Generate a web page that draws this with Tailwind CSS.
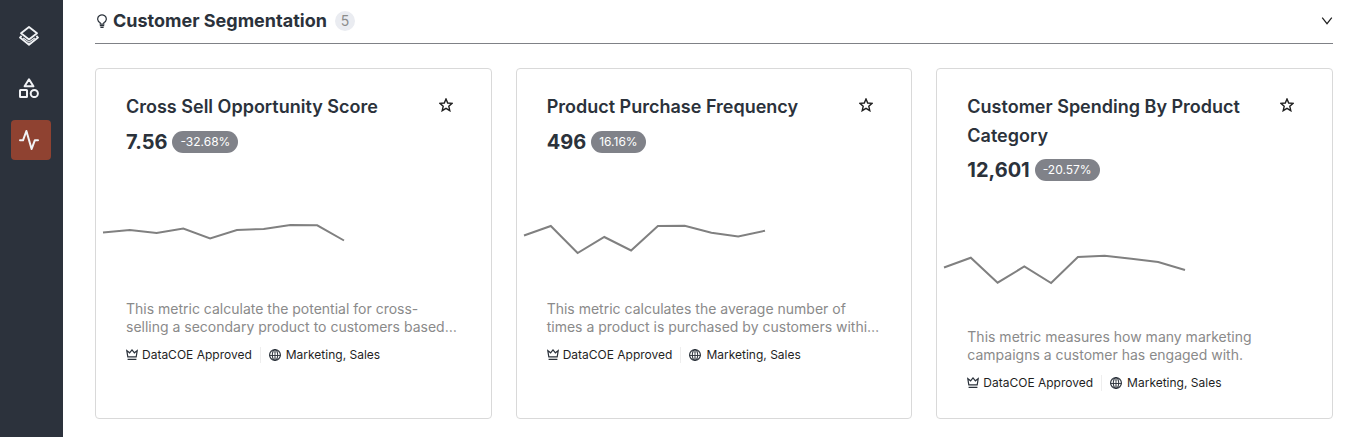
<!DOCTYPE html>
<html lang="en">
<head>
<meta charset="utf-8">
<meta name="viewport" content="width=device-width, initial-scale=1">
<title>Customer Segmentation</title>
<script src="https://cdn.jsdelivr.net/npm/@tailwindcss/browser@4"></script>
</head>
<body class="flex min-h-screen bg-white font-['Inter',sans-serif] text-[#2b323b]">
<svg class="hidden" aria-hidden="true">
  <symbol id="star" viewBox="0 0 14 14"><path d="M7 1 8.7 5l4.4.4-3.3 2.9 1 4.4L7 10.4l-3.8 2.3 1-4.4L.9 5.4 5.3 5Z" fill="none" stroke="#1f1f1f" stroke-width="1.4"/></symbol>
  <symbol id="crown" viewBox="0 0 12 12"><path d="M.8 1.6 1.8 7.9h8.4l1-6.3L8.4 3.8 6 .9 3.6 3.8ZM1.6 10.4h8.8" fill="none" stroke="#2b323b" stroke-width="1.2"/></symbol>
  <symbol id="globe" viewBox="0 0 12 12"><g fill="none" stroke="#2b323b"><circle cx="6" cy="6" r="5.4" stroke-width="1.2"/><ellipse cx="6" cy="6" rx="2.7" ry="5.4"/><path d="M.6 6.5h10.8M6 .6v10.8" stroke-width=".9"/><path d="M2 2.6q4 1.2 8 0M2 9.6q4-1.2 8 0" stroke-width=".4"/></g></symbol>
</svg>
<nav aria-label="Main" class="flex w-[63px] shrink-0 flex-col gap-3 bg-[#2c323c] pt-4 pl-[11px] text-[#f1f3f6]">
  <a href="#" aria-label="Layers" class="flex size-10 items-center rounded pl-2">
    <svg class="size-5" viewBox="0 0 20 20" fill="none" stroke="currentColor" stroke-width="1.8" stroke-linejoin="round"><path d="M10 1 18 7.3 10 13.5 2 7.3Z"/><path d="M2.6 9.8 1 11.5 10 18.7l9-7.2-1.6-1.7"/><path d="m4.2 12 5.8 4.1 5.8-4.1" stroke-width="1.1"/></svg>
  </a>
  <a href="#" aria-label="Categories" class="flex size-10 items-center rounded pl-2">
    <svg class="size-5" viewBox="0 0 20 20" fill="none" stroke="currentColor" stroke-width="2" stroke-linejoin="round"><path d="m10 1.3 4.4 7H5.6Z"/><rect x="1" y="12" width="7" height="7" rx=".5"/><circle cx="15.3" cy="15.5" r="3.6"/></svg>
  </a>
  <a href="#" aria-label="Metrics" aria-current="page" class="flex size-10 items-center rounded bg-[#8f4231] pl-2">
    <svg class="size-5" viewBox="0 0 20 20" fill="none" stroke="currentColor" stroke-width="2" stroke-linecap="round" stroke-linejoin="round"><path d="M1 10.3h3L7.4 1l5.2 18 3.2-8.7H19"/></svg>
  </a>
</nav>
<main class="min-w-0 flex-1 pr-[27px] pb-4 pl-8">
  <header class="flex h-11 items-center border-b border-[#7f8186] pb-0.5">
    <svg class="mr-[5px] ml-px h-[14px] w-3" viewBox="0 0 12 14" fill="none" stroke="#2b323b" stroke-width="1.4"><path d="M4.2 10.2V8.8C1.1 7.3.9 3.6 3.3 1.8c1.6-1.2 3.8-1.2 5.4 0 2.4 1.8 2.2 5.5-.9 7v1.4ZM3.8 11.7h4.4M4.4 13.4h3.2" stroke-width="1.2"/></svg>
    <h1 class="text-lg leading-7 font-bold">Customer Segmentation</h1>
    <span class="ml-2 flex size-5 items-center justify-center rounded-full bg-[#eaecf1] text-sm text-[#8c8c8c]">5</span>
    <button type="button" aria-label="Collapse section" class="ml-auto"><svg class="size-3" viewBox="0 0 12 12" fill="none" stroke="#1f1f1f" stroke-width="1.2"><path d="m1.2 2.7 4.8 6 4.8-6"/></svg></button>
  </header>
  <div class="mt-6 grid grid-cols-3 gap-6">
    <article class="rounded border border-[#d9d9d9] px-[30px] pt-[23px] pb-[25px]">
      <div class="flex items-start justify-between">
        <h2 class="text-lg leading-[29px] font-semibold">Cross Sell Opportunity Score</h2>
        <button type="button" aria-label="Add to favorites" class="mr-0.5 p-[6px]"><svg class="size-[14px]"><use href="#star"/></svg></button>
      </div>
      <p class="mt-[10px] flex items-center gap-[5px]"><strong class="text-xl leading-[22px] font-bold">7.56</strong><span class="rounded-full bg-[#808289] px-2 text-xs leading-[22px] text-white">-32.68%</span></p>
      <svg class="mt-[11px] -ml-[30px] h-[120px] w-64" viewBox="0 0 256 120" role="img" aria-label="Trend"><polyline fill="none" stroke="#808080" stroke-width="2" points="7,68.5 33.8,66 60.6,69 87.3,64.5 114.1,74.5 140.9,66 167.7,65 194.4,61 221.2,61.3 248,76.5"/></svg>
      <p class="mt-4 text-sm leading-[18px] text-[#8a8a8a]">This metric calculate the potential for cross-selling a secondary product to customers based…</p>
      <p class="mt-[11px] flex items-center text-xs leading-4 text-[#1f1f1f]"><svg class="mr-1 size-3"><use href="#crown"/></svg>DataCOE Approved<span class="mx-2 h-4 border-l border-[#eeeeee]"></span><svg class="mr-[5px] size-3"><use href="#globe"/></svg>Marketing, Sales</p>
    </article>
    <article class="rounded border border-[#d9d9d9] px-[30px] pt-[23px] pb-[25px]">
      <div class="flex items-start justify-between">
        <h2 class="text-lg leading-[29px] font-semibold">Product Purchase Frequency</h2>
        <button type="button" aria-label="Add to favorites" class="mr-0.5 p-[6px]"><svg class="size-[14px]"><use href="#star"/></svg></button>
      </div>
      <p class="mt-[10px] flex items-center gap-[5px]"><strong class="text-xl leading-[22px] font-bold">496</strong><span class="rounded-full bg-[#808289] px-2 text-xs leading-[22px] text-white">16.16%</span></p>
      <svg class="mt-[11px] -ml-[30px] h-[120px] w-64" viewBox="0 0 256 120" role="img" aria-label="Trend"><polyline fill="none" stroke="#808080" stroke-width="2" points="7,71.5 33.8,62 60.6,89 87.3,73 114.1,86.5 140.9,62 167.7,61.8 194.4,68.7 221.2,72.5 248,66.7"/></svg>
      <p class="mt-4 text-sm leading-[18px] text-[#8a8a8a]">This metric calculates the average number of times a product is purchased by customers withi…</p>
      <p class="mt-[11px] flex items-center text-xs leading-4 text-[#1f1f1f]"><svg class="mr-1 size-3"><use href="#crown"/></svg>DataCOE Approved<span class="mx-2 h-4 border-l border-[#eeeeee]"></span><svg class="mr-[5px] size-3"><use href="#globe"/></svg>Marketing, Sales</p>
    </article>
    <article class="rounded border border-[#d9d9d9] px-[30px] pt-[23px] pb-[27px]">
      <div class="flex items-start justify-between">
        <h2 class="text-lg leading-[29px] font-semibold">Customer Spending By Product Category</h2>
        <button type="button" aria-label="Add to favorites" class="mr-0.5 p-[6px]"><svg class="size-[14px]"><use href="#star"/></svg></button>
      </div>
      <p class="mt-[9px] flex items-center gap-[5px]"><strong class="text-xl leading-[22px] font-bold">12,601</strong><span class="rounded-full bg-[#808289] px-2 text-xs leading-[22px] text-white">-20.57%</span></p>
      <svg class="mt-[11px] -ml-[30px] h-[120px] w-64" viewBox="0 0 256 120" role="img" aria-label="Trend"><polyline fill="none" stroke="#808080" stroke-width="2" points="7,75.5 33.8,65.7 60.6,90.7 87.3,74.5 114.1,91 140.9,65 167.7,63.8 194.4,66.8 221.2,70 248,78"/></svg>
      <p class="mt-4 text-sm leading-[18px] text-[#8a8a8a]">This metric measures how many marketing campaigns a customer has engaged with.</p>
      <p class="mt-[11px] flex items-center text-xs leading-4 text-[#1f1f1f]"><svg class="mr-1 size-3"><use href="#crown"/></svg>DataCOE Approved<span class="mx-2 h-4 border-l border-[#eeeeee]"></span><svg class="mr-[5px] size-3"><use href="#globe"/></svg>Marketing, Sales</p>
    </article>
  </div>
</main>
</body>
</html>
